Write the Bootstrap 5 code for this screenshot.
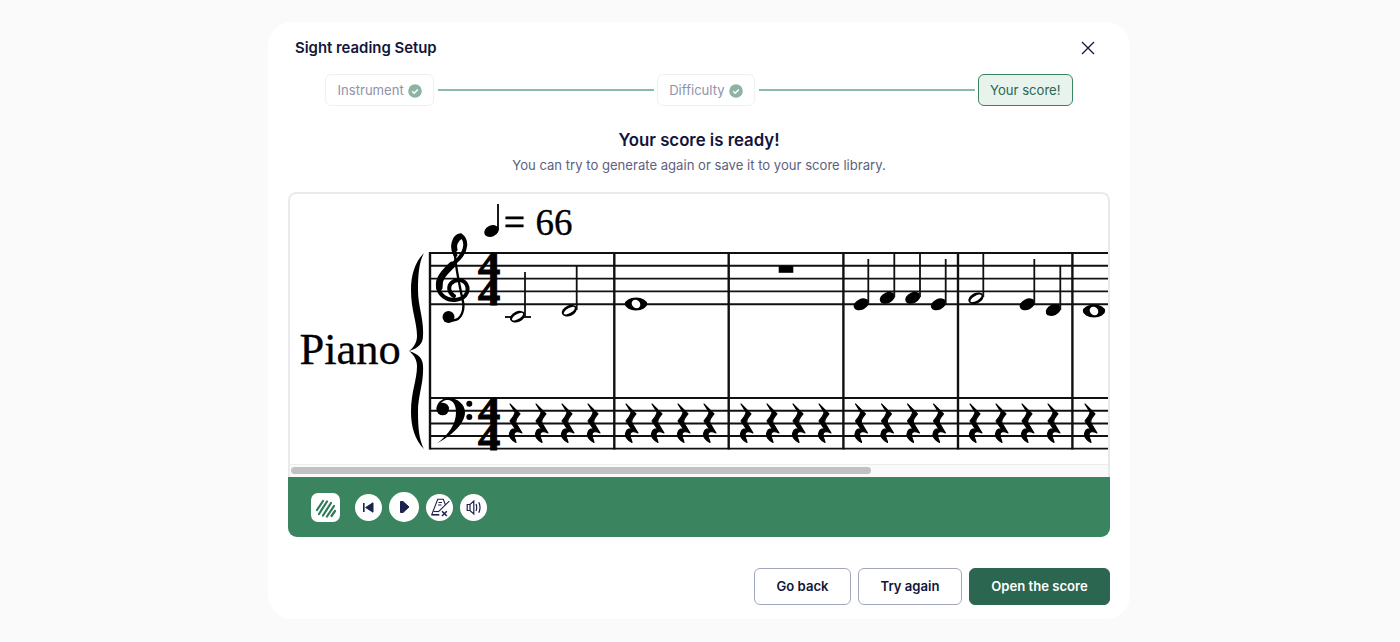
<!DOCTYPE html>
<html lang="en">
<head>
<meta charset="utf-8">
<title>Sight reading Setup</title>
<link href="https://cdn.jsdelivr.net/npm/bootstrap@5.3.0/dist/css/bootstrap.min.css" rel="stylesheet">
<style>
html,body{height:642px;overflow:hidden}
body{background:#fafafa;font-family:"Inter","Liberation Sans",sans-serif;color:#12163a}
.setup-shell{width:862px;height:597px;margin:22px 2px 0 0;background:#fff;border-radius:24px;padding:0 20px}
.setup-head{height:52px;padding:0 15px 0 7px}
.setup-title{font-size:14.9px;font-weight:600;color:#12163a;line-height:1}
.close-x{background:none;border:0;padding:0;width:14px;height:14px;display:block;line-height:0}
.stepper{height:32px;margin:0 37px}
.chip{height:32px;padding:1px 11.5px 0;border:1px solid #eff0f3;border-radius:6px;font-size:13.1px;color:#8f93a8;white-space:nowrap;background:#fff}
.chip-now{background:#e9f3ee;border-color:#3a855f;color:#2a6650}
.step-line{height:2px;background:#8abda6;margin:0 3px 0 4px}
.ready-title{font-size:16.8px;font-weight:600;color:#12163a;line-height:20px;margin:24px 0 0}
.ready-sub{font-size:13.1px;color:#5d6180;line-height:20px;margin:5px 0 0}
.score-box{height:345px;margin-top:17px;border-radius:8px 8px 9px 9px;overflow:hidden}
.sheet-frame{border:2px solid #e9e9ee;border-bottom:0;border-radius:8px 8px 0 0}
.score-sheet{display:block;width:818px;height:270px}
.scroll-track{height:13px;background:#fafafa;border-top:1px solid #ececec;padding:2px 1px 0}
.scroll-thumb{width:580px;height:7px;background:#c1c1c1;border-radius:4px}
.player-bar{height:60px;background:#3a855f;padding-left:23px}
.logo-tile{width:29px;height:29px;background:#fff;border-radius:7px;margin-right:15px}
.round-btn{width:27px;height:27px;border-radius:50%;background:#fff;border:0;padding:0;line-height:0}
.round-big{width:30px;height:30px}
.player-gap{gap:7px}
.foot-row{margin-top:31px;gap:7px}
.foot-btn{height:37px;font-size:13.1px;font-weight:600;border-radius:6px;padding:0;line-height:1;background:#fff;border:1px solid #a2a6bd;color:#12163a}
.w-back{width:97px}.w-again{width:104px}.w-open{width:141px;background:#2a6650;border-color:#2a6650;color:#fff}
.foot-btn:hover{background:#fff;color:#12163a}
.w-open:hover{background:#2a6650;color:#fff}
.sv-serif{font-family:"Liberation Serif",serif}
.sv-meter{opacity:.99}
</style>
</head>
<body class="d-flex justify-content-center align-items-start">
<div class="setup-shell">
  <div class="setup-head d-flex align-items-center justify-content-between">
    <div class="setup-title">Sight reading Setup</div>
    <button class="close-x" aria-label="Close" type="button"><svg width="14" height="14" viewBox="0 0 14 14"><path d="M1 1l12 12M13 1L1 13" stroke="#12163a" stroke-width="1.3" fill="none"/></svg></button>
  </div>
  <div class="stepper d-flex align-items-center">
    <div class="chip d-flex align-items-center gap-1">Instrument <svg width="14" height="14" viewBox="0 0 14 14"><circle cx="7" cy="7" r="6.8" fill="#8fb3a3"/><path d="M4.2 7.2l2 2 3.6-3.8" stroke="#fff" stroke-width="1.5" fill="none"/></svg></div>
    <div class="step-line flex-grow-1"></div>
    <div class="chip d-flex align-items-center gap-1">Difficulty <svg width="14" height="14" viewBox="0 0 14 14"><circle cx="7" cy="7" r="6.8" fill="#8fb3a3"/><path d="M4.2 7.2l2 2 3.6-3.8" stroke="#fff" stroke-width="1.5" fill="none"/></svg></div>
    <div class="step-line flex-grow-1"></div>
    <div class="chip chip-now d-flex align-items-center">Your score!</div>
  </div>
  <p class="ready-title text-center">Your score is ready!</p>
  <p class="ready-sub text-center">You can try to generate again or save it to your score library.</p>

  <div class="score-box">
    <div class="sheet-frame">
    <svg class="score-sheet" viewBox="290 194 818 270" xmlns="http://www.w3.org/2000/svg">
      <defs>
        <path id="qrest" d="M-6 0L4 10C1 14 -1 15 0 19L6 29C2 27 -2 27 -2 31C-2 34 0 36 0 38.5C-5 36 -8 32 -6 28C-5 25 -2 24 0 26L-6 17C-3 13 -1 11 -1 8Z" stroke="#000" stroke-width="1.1" stroke-linejoin="round"/>
        <ellipse id="qhead" rx="8" ry="5.4" transform="rotate(-25)"/>
        <g id="hhead"><ellipse rx="8" ry="5.3" transform="rotate(-25)"/><ellipse rx="6.3" ry="2.5" transform="rotate(-30)" fill="#fff"/></g>
        <g id="whole"><ellipse rx="11.2" ry="6.5"/><ellipse rx="4.6" ry="3.9" transform="rotate(40)" fill="#fff"/></g>
        <g id="bar4"><use href="#qrest" x="0"/><use href="#qrest" x="26"/><use href="#qrest" x="52"/><use href="#qrest" x="78"/></g>
      </defs>
      <!-- staves -->
      <g stroke="#111" stroke-width="1.9">
        <path d="M430 253H1108M430 265.8H1108M430 278.6H1108M430 291.4H1108M430 304.2H1108"/>
        <path d="M430 398H1108M430 410.8H1108M430 423.5H1108M430 436H1108M430 448.6H1108"/>
      </g>
      <g stroke="#111" stroke-width="2.4">
        <path d="M430 252V449.5M614.3 252V449.5M728.7 252V449.5M843.4 252V449.5M958 252V449.5M1072.4 252V449.5"/>
      </g>
      <!-- brace -->
      <path d="M424 253C415 262 411 275 411 290C411 310 417 322 417 336C417 343 413 348 409 351C413 354 417 359 417 366C417 380 411 392 411 412C411 427 415 440 424 449C419 440 418 427 418 412C418 395 424 383 423 366C423 359 419 354 409 351C419 348 423 343 423 336C424 319 418 307 418 290C418 275 419 262 424 253Z" fill="#000"/>
      <!-- tempo -->
      <ellipse cx="491.5" cy="231" rx="7.6" ry="5.6" transform="rotate(-25 491.5 231)"/>
      <path d="M498 204V230" stroke="#000" stroke-width="1.8"/>
      <text class="sv-serif" x="504" y="235" font-size="37" stroke="#000" stroke-width=".8">=</text>
      <text class="sv-serif" x="535.5" y="235" font-size="37" stroke="#000" stroke-width=".35">66</text>
      <text class="sv-serif" x="299.5" y="364" font-size="44.5" stroke="#000" stroke-width=".3">Piano</text>
      <!-- treble clef -->
      <g transform="translate(430 230) scale(.3333)" fill="none" stroke="#000" stroke-linecap="round">
        <path d="M75 60C72 90 85 150 98 210C105 240 95 270 68 272" stroke-width="7"/>
        <path d="M76 75C62 50 72 18 92 16C112 30 110 60 87 85C57 115 24 135 24 165C24 198 55 212 75 210C104 207 116 190 112 170C106 148 80 143 63 160C53 172 58 190 72 198" stroke-width="12"/>
        <path d="M66 105C40 130 24 148 28 172" stroke-width="20"/>
        <path d="M75 58C70 45 78 28 92 20" stroke-width="15"/>
      </g>
      <circle cx="448.5" cy="317" r="6" fill="#000"/>
      <!-- time signatures -->
      <g class="sv-serif sv-meter" font-size="39" font-weight="700" stroke="#000" stroke-width="1">
        <text transform="translate(478 0) scale(1.14 1)"><tspan x="0" y="279">4</tspan><tspan x="0" y="305">4</tspan></text>
        <text transform="translate(478 0) scale(1.14 1)"><tspan x="0" y="424">4</tspan><tspan x="0" y="450">4</tspan></text>
      </g>
      <!-- bass clef -->
      <path d="M437 408C437 401 444 398 449 398C458 398 465 405 465 412C465 425 450 436 437 443.5C449 434 456 424 456 412C456 405 453 400 448 400C444 400 441 402 440.5 405Z" fill="#000"/>
      <circle cx="442.7" cy="409" r="6.3" fill="#000"/>
      <circle cx="469.3" cy="403.8" r="3" fill="#000"/><circle cx="469.3" cy="417" r="3" fill="#000"/>
      <!-- measure 1 -->
      <path d="M505 317H531" stroke="#111" stroke-width="1.9"/>
      <use href="#hhead" x="517.5" y="316.7"/><path d="M525 272V316" stroke="#111" stroke-width="1.8"/>
      <use href="#hhead" x="569.3" y="310.7"/><path d="M576.7 266V310" stroke="#111" stroke-width="1.8"/>
      <use href="#whole" x="636" y="304"/>
      <rect x="778.7" y="266" width="14.6" height="6.8"/>
      <!-- measure 4 -->
      <use href="#qhead" x="861.3" y="304.3"/><path d="M868.3 259V304" stroke="#111" stroke-width="1.8"/>
      <use href="#qhead" x="887.3" y="297.8"/><path d="M894.3 253V297" stroke="#111" stroke-width="1.8"/>
      <use href="#qhead" x="912.8" y="297.8"/><path d="M920 253V297" stroke="#111" stroke-width="1.8"/>
      <use href="#qhead" x="938.5" y="304.3"/><path d="M945.7 259V304" stroke="#111" stroke-width="1.8"/>
      <!-- measure 5 -->
      <use href="#hhead" x="976" y="298.3"/><path d="M983.3 253V297" stroke="#111" stroke-width="1.8"/>
      <use href="#qhead" x="1027.3" y="304.3"/><path d="M1034.3 259V304" stroke="#111" stroke-width="1.8"/>
      <use href="#qhead" x="1053.3" y="310"/><path d="M1060.3 266V310" stroke="#111" stroke-width="1.8"/>
      <use href="#whole" x="1094" y="311"/>
      <!-- bass rests -->
      <use href="#bar4" x="516" y="404"/><use href="#bar4" x="632" y="404"/><use href="#bar4" x="747" y="404"/>
      <use href="#bar4" x="861.5" y="404"/><use href="#bar4" x="976" y="404"/><use href="#qrest" x="1091" y="404"/>
    </svg>
    <div class="scroll-track"><div class="scroll-thumb"></div></div>
    </div>
    <div class="player-bar d-flex align-items-center">
      <div class="logo-tile d-flex align-items-center justify-content-center">
        <svg width="29" height="29" viewBox="0 0 29 29"><g stroke="#2f7a58" stroke-width="2.2" stroke-linecap="round"><path d="M6 17L12 8"/><path d="M8 21L16 8.5"/><path d="M12 22.5L20 10"/><path d="M16 23.5L23 13"/><path d="M20.5 23L24 18"/></g></svg>
      </div>
      <div class="d-flex align-items-center player-gap">
        <button class="round-btn" type="button" aria-label="Restart"><svg width="27" height="27" viewBox="0 0 27 27"><path d="M8.8 9V18" stroke="#1c2350" stroke-width="1.6"/><path d="M18 8.8V18.2L10.6 13.5Z" fill="#1c2350" stroke="#1c2350" stroke-linejoin="round"/></svg></button>
        <button class="round-btn round-big" type="button" aria-label="Play"><svg width="30" height="30" viewBox="0 0 30 30"><path d="M11.5 9.5H14L20 15L14 20.5H11.5Z" fill="#1c2350" stroke="#1c2350" stroke-linejoin="round"/></svg></button>
        <button class="round-btn" type="button" aria-label="Metronome"><svg width="27" height="27" viewBox="0 0 27 27" fill="none" stroke="#1c2350" stroke-width="1.1"><path d="M5.7 20.8L11.7 5.2H17.3L19.5 11"/><path d="M5.4 20.8H13.3" stroke-width="1.6"/><path d="M7.5 17.5H13"/><path d="M12.5 8.5H16M12 11H15.5"/><path d="M12.3 17.8L23.3 7.2"/><path d="M16 17.2L20.8 22M20.8 17.2L16 22" stroke-width="1.5"/></svg></button>
        <button class="round-btn" type="button" aria-label="Volume"><svg width="27" height="27" viewBox="0 0 27 27" fill="none" stroke="#1c2350" stroke-width="1.2"><path d="M7.2 10.5H10L13.8 7V20L10 16.5H7.2Z"/><path d="M10 10.5V16.5"/><path d="M16 10C17 12.5 17 14.5 16 17"/><path d="M18.8 8.2C20.3 11.5 20.3 15.5 18.8 18.8"/></svg></button>
      </div>
    </div>
  </div>

  <div class="foot-row d-flex justify-content-end">
    <button class="btn foot-btn w-back" type="button">Go back</button>
    <button class="btn foot-btn w-again" type="button">Try again</button>
    <button class="btn foot-btn w-open" type="button">Open the score</button>
  </div>
</div>
<script src="https://cdn.jsdelivr.net/npm/bootstrap@5.3.0/dist/js/bootstrap.bundle.min.js"></script>
</body>
</html>
